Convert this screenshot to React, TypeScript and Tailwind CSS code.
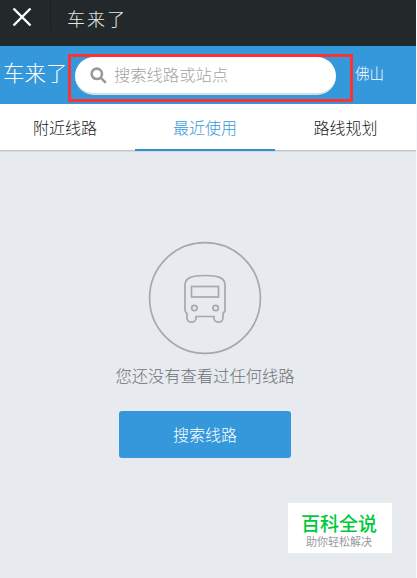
const tabs = [
  { label: '附近线路', active: false },
  { label: '最近使用', active: true },
  { label: '路线规划', active: false },
];

function TitleBar() {
  return (
    <header className="flex h-[46px] items-center border-b border-[#123044] bg-[#23292b]">
      <svg className="ml-[12px] mb-[11px] size-[20px]" viewBox="0 0 20 20" fill="none" stroke="#fff" strokeWidth="2.4">
        <path d="M1.5 1.5 18.5 18.5M18.5 1.5 1.5 18.5" />
      </svg>
      <div className="ml-[18px] mb-[15px] h-[30px] w-px bg-[#1a1f20]" />
      <h1 className="ml-[16px] mb-[9px] text-[18px] leading-[24px] font-light tracking-[2px] text-[#e4e6e6]">车来了</h1>
    </header>
  );
}

function SearchBar() {
  return (
    <div className="flex h-[58px] items-start bg-[#3498db]">
      <span className="mt-[11px] w-[68px] pl-[3px] text-[21.5px] leading-[30px] font-light whitespace-nowrap text-white">车来了</span>
      <div className="mt-[8px] h-[48px] w-[285px] shrink-0 border-[3px] border-[#fc3234] pl-[4px]">
        <div className="flex h-[38px] w-[261px] items-center rounded-full border-b-2 border-[#d7dde3] bg-white pl-[15px]">
          <svg className="size-[17px]" viewBox="0 0 17 17" fill="none" stroke="#999" strokeWidth="2.6">
            <circle cx="6.8" cy="6.8" r="5.2" />
            <path d="M10.6 10.6 15.8 15.8" />
          </svg>
          <span className="mb-[2px] ml-[7px] text-[16.3px] leading-[20px] font-light text-[#a3a3a3]">搜索线路或站点</span>
        </div>
      </div>
      <span className="mt-[17px] ml-[2px] text-[14.5px] leading-[20px] font-light text-white">佛山</span>
    </div>
  );
}

function Tabs() {
  return (
    <nav className="flex h-[47px] bg-white text-[16px] font-light">
      {tabs.map((t, i) => (
        <div
          key={t.label}
          className={
            t.active
              ? 'flex w-[140px] items-center justify-center border-b-2 border-[#348fcc] text-[#3498db]'
              : i === 0
                ? 'flex w-[135px] items-center justify-center border-b border-[#c4c6c9] pr-[5px] pb-px text-[#222]'
                : 'flex flex-1 items-center justify-center border-b border-[#c4c6c9] pb-px text-[#222]'
          }
        >
          {t.label}
        </div>
      ))}
    </nav>
  );
}

function BusIcon() {
  return (
    <svg className="size-[114px]" viewBox="0 0 114 114" fill="none" stroke="#a5a9ab" strokeWidth="1.7">
      <circle cx="57" cy="57" r="55.4" />
      <path d="M37 44C37 37 43 34.5 57 34.5S77 37 77 44V69C77 72 75 71 75 73V77C75 82.500 66 82.500 66 77V75.500H48V77C48 82.500 39 82.500 39 77V73C39 71 37 72 37 69Z" />
      <rect x="43.500" y="45.500" width="27" height="10.500" />
      <circle cx="46.400" cy="67" r="2.700" />
      <circle cx="67.600" cy="67" r="2.700" />
    </svg>
  );
}

export default function App() {
  return (
    <div className="h-[578px] w-[417px] overflow-hidden border-r border-[#f7f8fa] bg-[#e7ebf0] font-['Noto_Sans_CJK_SC',sans-serif]">
      <TitleBar />
      <SearchBar />
      <div className="h-[47px] shadow-[0_1px_0_#d8dadd]">
        <Tabs />
      </div>
      <main className="flex flex-col items-center pt-[90px] pr-[6px]">
        <BusIcon />
        <p className="mt-[8px] text-[16.3px] leading-[24px] font-light text-[#6e7173]">您还没有查看过任何线路</p>
        <button className="mt-[24px] h-[47px] w-[172px] rounded-[3px] bg-[#3498db] pb-[2px] text-[16px] font-light text-white">
          搜索线路
        </button>
      </main>
      <aside className="mt-[45px] ml-[288px] h-[50px] w-[104px] bg-white pt-[9px] pr-[2px] text-center">
        <p className="text-[19px] leading-[22px] font-medium text-[#00c93c]">百科全说</p>
        <p className="mt-[1px] text-[11px] leading-[13px] text-[#999]">助你轻松解决</p>
      </aside>
    </div>
  );
}
